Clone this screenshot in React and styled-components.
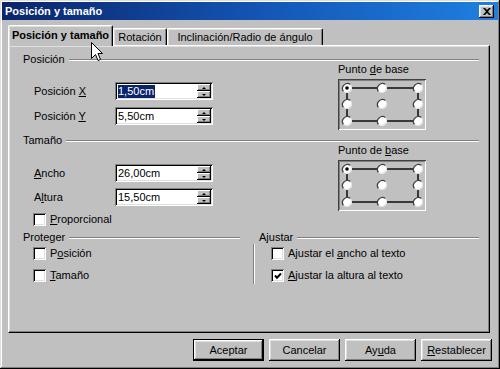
import React from "react";
import styled, { createGlobalStyle } from "styled-components";

const Global = createGlobalStyle`
  html, body { margin: 0; padding: 0; background: #c0c0c0; }
  body {
    font-family: "Liberation Sans", Arial, sans-serif;
    font-size: 11px;
    color: #000;
  }
`;

const raised = `
  box-shadow: inset -1px -1px #000, inset 1px 1px #fff,
    inset -2px -2px #808080, inset 2px 2px #dfdfdf;
`;

const sunken = `
  box-shadow: inset 1px 1px #808080, inset -1px -1px #fff,
    inset 2px 2px #000, inset -2px -2px #dfdfdf;
`;

const Window = styled.div`
  position: relative;
  box-sizing: border-box;
  width: 500px;
  height: 369px;
  padding: 2px;
  background: #c0c0c0;
  box-shadow: inset -1px -1px #000, inset 1px 1px #dfdfdf,
    inset -2px -2px #808080, inset 2px 2px #fff;
  display: flex;
  flex-direction: column;
  overflow: hidden;
`;

const TitleBar = styled.div`
  height: 18px;
  display: flex;
  align-items: center;
  justify-content: space-between;
  padding: 0 4px 0 3px;
  background: linear-gradient(to right, #0a246a, #1458b8 55%, #1e80e0);
  color: #fff;
  font-weight: bold;
  font-size: 11px;
`;

const CloseBtn = styled.div`
  width: 15px;
  height: 13px;
  box-sizing: border-box;
  background: #c0c0c0;
  ${raised}
  display: flex;
  align-items: center;
  justify-content: center;
`;

const Body = styled.div`
  flex: 1;
  display: flex;
  flex-direction: column;
  padding: 5px 8px 6px 6px;
`;

const TabStrip = styled.div`
  display: flex;
  align-items: flex-end;
  height: 20px;
  position: relative;
  z-index: 1;
`;

const Tab = styled.div`
  box-sizing: border-box;
  width: ${(p) => p.$w}px;
  height: ${(p) => (p.$active ? 21 : 17)}px;
  margin-bottom: ${(p) => (p.$active ? -1 : 0)}px;
  background: #c0c0c0;
  border-top: 1px solid #fff;
  border-left: 1px solid #fff;
  border-right: 1px solid #000;
  border-radius: 2px 2px 0 0;
  box-shadow: inset -1px 0 #808080, inset 1px 1px #dfdfdf;
  display: flex;
  align-items: ${(p) => (p.$active ? "flex-start" : "center")};
  padding-top: ${(p) => (p.$active ? 3 : 0)}px;
  justify-content: center;
  font-weight: ${(p) => (p.$active ? "bold" : "normal")};
  white-space: nowrap;
`;

const Panel = styled.div`
  flex: 1;
  box-sizing: border-box;
  border-top: 1px solid #fff;
  border-left: 1px solid #fff;
  border-right: 1px solid #000;
  border-bottom: 1px solid #000;
  box-shadow: inset -1px -1px #808080, inset 1px 1px #dfdfdf;
  padding: 7px 10px 0 14px;
  display: flex;
  flex-direction: column;
`;

const GroupHeader = styled.div`
  display: flex;
  align-items: center;
  height: 13px;
  line-height: 13px;
  padding-left: ${(p) => p.$indent || 0}px;
  white-space: nowrap;
  &::after {
    content: "";
    flex: 1;
    margin-left: 4px;
    border-top: 1px solid #808080;
    border-bottom: 1px solid #fff;
  }
`;

const Group = styled.div`
  display: grid;
  grid-template-columns: 1fr 88px;
  padding-right: 53px;
  margin-bottom: ${(p) => p.$mb}px;
`;

const Fields = styled.div`
  display: flex;
  flex-direction: column;
  gap: ${(p) => p.$gap}px;
  padding-top: ${(p) => p.$pt}px;
  padding-left: 11px;
`;

const FieldRow = styled.div`
  display: grid;
  grid-template-columns: 81px 98px;
  align-items: center;
  height: 18px;
`;

const SpinField = styled.div`
  position: relative;
  box-sizing: border-box;
  width: 98px;
  height: 18px;
  background: #fff;
  ${sunken}
  display: flex;
  align-items: center;
  padding: 0 2px 0 3px;
`;

const Value = styled.span`
  line-height: 13px;
  padding: 0 1px 0 0;
  background: ${(p) => (p.$selected ? "#0a246a" : "transparent")};
  color: ${(p) => (p.$selected ? "#fff" : "#000")};
`;

const Spinner = styled.div`
  position: absolute;
  right: 2px;
  top: 2px;
  bottom: 2px;
  width: 14px;
  display: flex;
  flex-direction: column;
`;

const SpinBtn = styled.div`
  flex: 1;
  background: #c0c0c0;
  box-shadow: inset -1px -1px #000, inset 1px 1px #fff, inset -2px -2px #808080;
  display: flex;
  align-items: center;
  justify-content: center;
  &::before {
    content: "";
    border-left: 2px solid transparent;
    border-right: 2px solid transparent;
    ${(p) => (p.$up ? "border-bottom: 2px solid #000;" : "border-top: 2px solid #000;")}
  }
`;

const BaseCol = styled.div`
  margin-top: -3px;
  display: flex;
  flex-direction: column;
`;

const BaseLabel = styled.div`
  line-height: 13px;
  margin-bottom: 3px;
  white-space: nowrap;
`;

const BaseBox = styled.div`
  box-sizing: border-box;
  width: 88px;
  height: 51px;
  box-shadow: inset 1px 1px #404040, inset -1px -1px #fff, inset 2px 2px #808080;
  display: flex;
`;

const CheckRow = styled.label`
  display: flex;
  align-items: center;
  gap: 4px;
  height: 13px;
  line-height: 13px;
  white-space: nowrap;
`;

const CheckBox = styled.span`
  box-sizing: border-box;
  width: 13px;
  height: 13px;
  background: #fff;
  ${sunken}
  display: flex;
  align-items: center;
  justify-content: center;
  flex: none;
`;

const PropRow = styled.div`
  margin-top: 7px;
  padding-left: 10px;
`;

const Bottom = styled.div`
  display: grid;
  grid-template-columns: 217px 1fr;
  column-gap: 13px;
`;

const CheckList = styled.div`
  display: flex;
  flex-direction: column;
  gap: 9px;
  padding: 3px 0 2px ${(p) => p.$indent}px;
  ${(p) =>
    p.$ruled &&
    `border-left: 1px solid #808080; box-shadow: inset 1px 0 #fff;`}
`;

const ButtonRow = styled.div`
  display: flex;
  justify-content: flex-end;
  gap: 5px;
  margin: 6px -2px 0 0;
`;

const Button = styled.div`
  box-sizing: border-box;
  width: 71px;
  height: 22px;
  display: flex;
  align-items: center;
  justify-content: center;
  background: #c0c0c0;
  ${raised}
  ${(p) => p.$default && `border: 1px solid #000;`}
`;

const Cursor = styled.svg`
  position: absolute;
  left: 91px;
  top: 42px;
  z-index: 5;
`;

const BasePoints = () => {
  const xs = [9, 44, 80];
  const ys = [9, 25, 42];
  const pts = [];
  ys.forEach((y, r) =>
    xs.forEach((x, c) => pts.push({ x, y, key: `${r}-${c}` }))
  );
  return (
    <svg width="88" height="51" viewBox="0 0 88 51">
      <rect x="9" y="9" width="71" height="33" fill="none" stroke="#000" strokeWidth="1.4" />
      {pts.map((p, i) => (
        <g key={p.key}>
          <circle cx={p.x} cy={p.y} r="5" fill="#fff" />
          <path
            d={`M${p.x - 3.5} ${p.y + 3.5} A5 5 0 0 1 ${p.x + 3.5} ${p.y - 3.5}`}
            fill="none"
            stroke="#404040"
            strokeWidth="1.3"
          />
          <path
            d={`M${p.x + 3.5} ${p.y - 3.5} A5 5 0 0 1 ${p.x - 3.5} ${p.y + 3.5}`}
            fill="none"
            stroke="#dfdfdf"
            strokeWidth="1"
          />
          {i === 0 && <circle cx={p.x} cy={p.y} r="1.8" fill="#000" />}
        </g>
      ))}
    </svg>
  );
};

const Check = ({ checked, children }) => (
  <CheckRow>
    <CheckBox>
      {checked && (
        <svg width="8" height="8" viewBox="0 0 8 8">
          <path d="M1 3.5 L3 5.8 L7 1.5" fill="none" stroke="#000" strokeWidth="2" />
        </svg>
      )}
    </CheckBox>
    <span>{children}</span>
  </CheckRow>
);

const Field = ({ label, value, selected }) => (
  <FieldRow>
    <span>{label}</span>
    <SpinField>
      <Value $selected={selected}>{value}</Value>
      <Spinner>
        <SpinBtn $up />
        <SpinBtn />
      </Spinner>
    </SpinField>
  </FieldRow>
);

export default function App() {
  return (
    <>
      <Global />
      <Window>
        <TitleBar>
          <span>Posición y tamaño</span>
          <CloseBtn>
            <svg width="8" height="7" viewBox="0 0 8 7">
              <path
                d="M0 0 H2 L4 2 L6 0 H8 L5 3.5 L8 7 H6 L4 5 L2 7 H0 L3 3.5 Z"
                fill="#000"
              />
            </svg>
          </CloseBtn>
        </TitleBar>
        <Body>
          <TabStrip>
            <Tab $active $w={105}>Posición y tamaño</Tab>
            <Tab $w={54}>Rotación</Tab>
            <Tab $w={156}>Inclinación/Radio de ángulo</Tab>
          </TabStrip>
          <Panel>
            <GroupHeader>Posición</GroupHeader>
            <Group $mb={4}>
              <Fields $pt={16} $gap={7}>
                <Field label={<>Posición <u>X</u></>} value="1,50cm" selected />
                <Field label={<>Posición <u>Y</u></>} value="5,50cm" />
              </Fields>
              <BaseCol>
                <BaseLabel>Punto <u>d</u>e base</BaseLabel>
                <BaseBox>
                  <BasePoints />
                </BaseBox>
              </BaseCol>
            </Group>

            <GroupHeader>Tamaño</GroupHeader>
            <Group $mb={5}>
              <div>
                <Fields $pt={17} $gap={6}>
                  <Field label={<><u>A</u>ncho</>} value="26,00cm" />
                  <Field label={<>A<u>l</u>tura</>} value="15,50cm" />
                </Fields>
                <PropRow>
                  <Check><u>P</u>roporcional</Check>
                </PropRow>
              </div>
              <BaseCol>
                <BaseLabel>Punto de <u>b</u>ase</BaseLabel>
                <BaseBox>
                  <BasePoints />
                </BaseBox>
              </BaseCol>
            </Group>

            <Bottom>
              <div>
                <GroupHeader>Proteger</GroupHeader>
                <CheckList $indent={10}>
                  <Check>P<u>o</u>sición</Check>
                  <Check><u>T</u>amaño</Check>
                </CheckList>
              </div>
              <div>
                <GroupHeader $indent={6}>Ajustar</GroupHeader>
                <CheckList $indent={17} $ruled>
                  <Check>Ajustar el <u>a</u>ncho al texto</Check>
                  <Check checked><u>A</u>justar la altura al texto</Check>
                </CheckList>
              </div>
            </Bottom>
          </Panel>
          <ButtonRow>
            <Button $default>Aceptar</Button>
            <Button>Cancelar</Button>
            <Button>Ay<u>u</u>da</Button>
            <Button><u>R</u>establecer</Button>
          </ButtonRow>
        </Body>
        <Cursor width="12" height="20" viewBox="0 0 12 20">
          <path
            d="M0.5 0.5 L0.5 16.5 L4.5 12.5 L7 18.5 L9.5 17.5 L7 11.5 L11.5 11.5 Z"
            fill="#fff"
            stroke="#000"
            strokeWidth="1"
          />
        </Cursor>
      </Window>
    </>
  );
}
